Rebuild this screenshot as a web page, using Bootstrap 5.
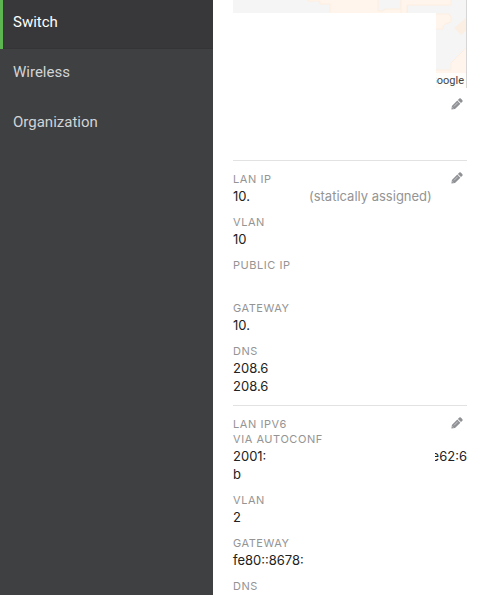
<!DOCTYPE html>
<html lang="en">
<head>
<meta charset="utf-8">
<meta name="viewport" content="width=device-width, initial-scale=1">
<title>Switch details</title>
<link href="https://cdn.jsdelivr.net/npm/bootstrap@5.3.0/dist/css/bootstrap.min.css" rel="stylesheet">
<style>
body { font-family: Inter, "Liberation Sans", sans-serif; font-size: 13px; line-height: 18px; color: #222; background: #fff; }
.side-menu { width: 213px; background: #3f4042; }
.side-menu .nav-link { height: 50px; padding: 12px 10px 0; font-family: Roboto, sans-serif; font-size: 15px; line-height: 20px; color: #d2d4d6; border-left: 3px solid transparent; border-radius: 0; }
.side-menu .nav-link.active { height: 49px; margin-bottom: 1px; color: #fff; background: #38383a; border-left-color: #5cb550; box-shadow: inset 0 -1px #343436; }
.details { padding: 0 14px 0 20px; }
.site-map { height: 88px; border-right: 1px solid #d6d6d6; background: #f5f5f5; }
.map-mask { left: 0; right: 30px; top: 13px; bottom: 0; background: #fff; }
.map-credit { right: 0; bottom: 0; width: 30px; height: 15px; padding-right: 2px; background: #fffdfa; font-family: Roboto, sans-serif; font-size: 11px; line-height: 15px; color: #444; }
.address { height: 72px; padding-top: 10px; }
.info { padding: 11px 0 10px; border-top: 1px solid #e2e2e2; }
.info dl > div + div { margin-top: 10px; }
.info dt { font-size: 11px; line-height: 15px; font-weight: 400; color: #949494; text-transform: uppercase; letter-spacing: .05em; }
.info dd { min-height: 18px; }
.note { color: #949494; margin-left: 59px; }
.tail { width: 32px; height: 18px; }
.edit { width: 20px; height: 12px; color: #8f9195; }
</style>
</head>
<body>
<div class="d-flex min-vh-100">
  <nav class="side-menu flex-shrink-0" aria-label="Main">
    <div class="nav flex-column">
      <a class="nav-link active" aria-current="page" href="#switch">Switch</a>
      <a class="nav-link" href="#wireless">Wireless</a>
      <a class="nav-link" href="#organization">Organization</a>
    </div>
  </nav>
  <main class="details flex-grow-1">
    <div class="site-map position-relative overflow-hidden">
      <svg class="d-block w-100 h-100" viewBox="0 0 233 88" preserveAspectRatio="xMaxYMin slice" aria-hidden="true">
        <g fill="#fff5ed" stroke="#fdeee0" stroke-width="1">
          <path d="M75-2V1H87V4H97V16H174V-2H168V9H153L149 11H145V-2Z"/>
          <path d="M168-2V16H174V5H218V-2Z"/>
          <path d="M200 14H216L218 17V22L212 24L210 26V29H200Z"/>
          <path d="M235 46L218 63V70H200V90H235Z"/>
        </g>
        <path d="M221 28L234 17V30L228 35Z" fill="#fbeee3"/>
      </svg>
      <div class="map-mask position-absolute"></div>
      <div class="map-credit position-absolute d-flex justify-content-end overflow-hidden">Google</div>
    </div>
    <div class="address d-flex justify-content-end">
      <button type="button" class="edit btn p-0 border-0 d-flex justify-content-center align-items-center" aria-label="Edit address">
        <svg width="12" height="12" viewBox="0 0 12 12" aria-hidden="true"><path fill="currentColor" d="M.4 11.6L.9 8L6.3 2.6L9.4 5.7L4 11.1ZM6.9 2L8.3.6Q9.1 0 9.8.6L11.4 2.2Q12 2.9 11.4 3.7L10 5.1Z"/><path d="M3 8.4L6.8 4.6M1.3 9.5L2.5 10.7" stroke="#fff" stroke-width=".5"/></svg>
      </button>
    </div>
    <section class="info">
      <button type="button" class="edit btn p-0 border-0 d-flex justify-content-center align-items-center float-end" aria-label="Edit LAN IP">
        <svg width="12" height="12" viewBox="0 0 12 12" aria-hidden="true"><path fill="currentColor" d="M.4 11.6L.9 8L6.3 2.6L9.4 5.7L4 11.1ZM6.9 2L8.3.6Q9.1 0 9.8.6L11.4 2.2Q12 2.9 11.4 3.7L10 5.1Z"/><path d="M3 8.4L6.8 4.6M1.3 9.5L2.5 10.7" stroke="#fff" stroke-width=".5"/></svg>
      </button>
      <dl class="mb-0">
        <div><dt>LAN IP</dt><dd class="mb-0">10.<span class="note">(statically assigned)</span></dd></div>
        <div><dt>VLAN</dt><dd class="mb-0">10</dd></div>
        <div><dt>Public IP</dt><dd class="mb-0"></dd></div>
        <div><dt>Gateway</dt><dd class="mb-0">10.</dd></div>
        <div><dt>DNS</dt><dd class="mb-0">208.6</dd><dd class="mb-0">208.6</dd></div>
      </dl>
    </section>
    <section class="info">
      <button type="button" class="edit btn p-0 border-0 d-flex justify-content-center align-items-center float-end" aria-label="Edit LAN IPv6">
        <svg width="12" height="12" viewBox="0 0 12 12" aria-hidden="true"><path fill="currentColor" d="M.4 11.6L.9 8L6.3 2.6L9.4 5.7L4 11.1ZM6.9 2L8.3.6Q9.1 0 9.8.6L11.4 2.2Q12 2.9 11.4 3.7L10 5.1Z"/><path d="M3 8.4L6.8 4.6M1.3 9.5L2.5 10.7" stroke="#fff" stroke-width=".5"/></svg>
      </button>
      <dl class="mb-0">
        <div><dt>LAN IPv6<br>via autoconf</dt><dd class="mb-0"><div class="d-flex justify-content-between"><span>2001:</span><span class="tail d-flex justify-content-end overflow-hidden">e62:6</span></div>b</dd></div>
        <div><dt>VLAN</dt><dd class="mb-0">2</dd></div>
        <div><dt>Gateway</dt><dd class="mb-0">fe80::8678:</dd></div>
        <div><dt>DNS</dt></div>
      </dl>
    </section>
  </main>
</div>
<script src="https://cdn.jsdelivr.net/npm/bootstrap@5.3.0/dist/js/bootstrap.bundle.min.js"></script>
</body>
</html>
